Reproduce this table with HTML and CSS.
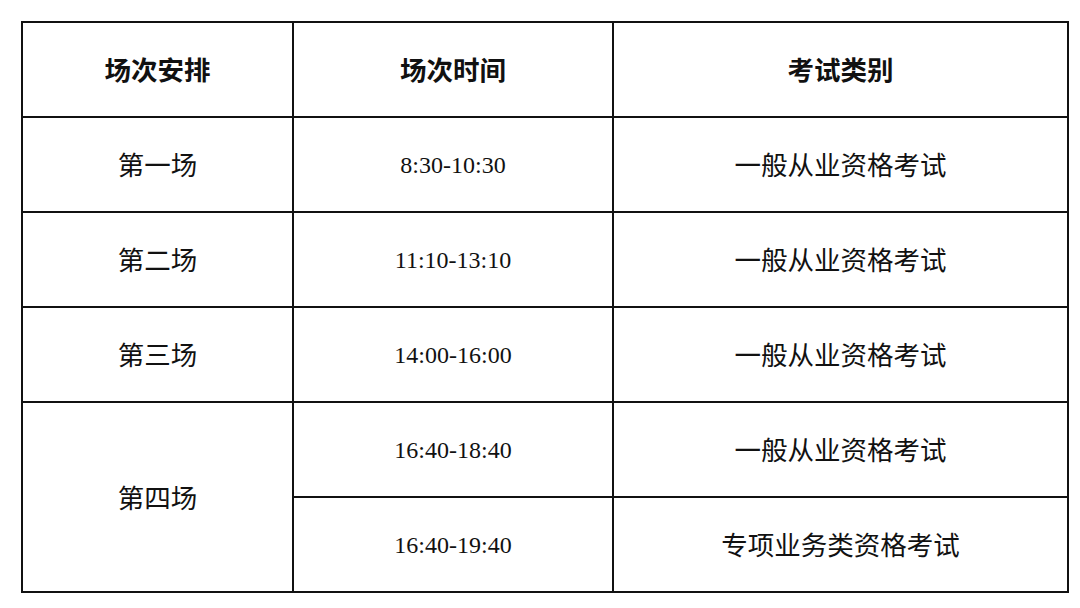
FILE: index.html
```html
<!DOCTYPE html>
<html lang="zh">
<head>
<meta charset="utf-8">
<link rel="stylesheet" href="styles.css">
</head>
<body>
<table class="schedule">
  <colgroup>
    <col class="c1"><col class="c2"><col class="c3">
  </colgroup>
  <thead>
    <tr><th>场次安排</th><th>场次时间</th><th>考试类别</th></tr>
  </thead>
  <tbody>
    <tr><td>第一场</td><td class="time">8:30-10:30</td><td>一般从业资格考试</td></tr>
    <tr><td>第二场</td><td class="time">11:10-13:10</td><td>一般从业资格考试</td></tr>
    <tr><td>第三场</td><td class="time">14:00-16:00</td><td>一般从业资格考试</td></tr>
    <tr><td rowspan="2">第四场</td><td class="time">16:40-18:40</td><td>一般从业资格考试</td></tr>
    <tr><td class="time">16:40-19:40</td><td>专项业务类资格考试</td></tr>
  </tbody>
</table>
</body>
</html>
```
FILE: styles.css
```css
html, body {
  margin: 0;
  padding: 0;
  background: #ffffff;
}
body {
  padding: 21px 0 0 21px;
  font-family: "Noto Sans CJK SC", "Liberation Serif", serif;
  color: #111111;
}
.schedule {
  border-collapse: collapse;
  width: 1046px;
  table-layout: fixed;
}
.c1 { width: 271px; }
.c2 { width: 320px; }
.c3 { width: 455px; }
.schedule th,
.schedule td {
  border: 2px solid #111111;
  height: 93px;
  padding: 0;
  text-align: center;
  vertical-align: middle;
  font-size: 26.5px;
  font-weight: 400;
  line-height: 1;
}
.schedule th {
  font-weight: 700;
}
.schedule td.time {
  font-family: "Liberation Serif", serif;
  font-size: 24px;
}
```
